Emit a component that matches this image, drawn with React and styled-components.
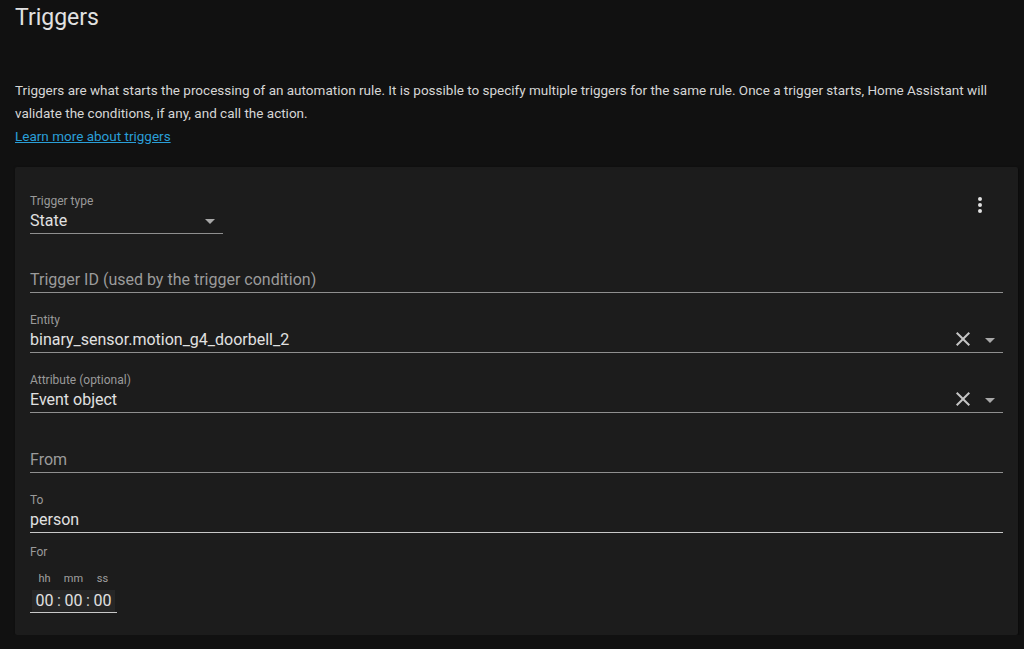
import styled, { createGlobalStyle } from 'styled-components';

const GlobalStyle = createGlobalStyle`
    html, body {
        margin: 0;
        padding: 0;
        background-color: #111111;
        font-family: Roboto, "Liberation Sans", sans-serif;
        color: #e1e1e1;
    }
`

const IconMore = () => (
    <svg width="24" height="24" viewBox="0 0 24 24">
        <path fill="#e1e1e1" d="M12,16A2,2 0 0,1 14,18A2,2 0 0,1 12,20A2,2 0 0,1 10,18A2,2 0 0,1 12,16M12,10A2,2 0 0,1 14,12A2,2 0 0,1 12,14A2,2 0 0,1 10,12A2,2 0 0,1 12,10M12,4A2,2 0 0,1 14,6A2,2 0 0,1 12,8A2,2 0 0,1 10,6A2,2 0 0,1 12,4Z" />
    </svg>
);

const IconClose = () => (
    <svg width="24" height="24" viewBox="0 0 24 24">
        <path fill="#c4c4c4" d="M19,6.41L17.59,5L12,10.59L6.41,5L5,6.41L10.59,12L5,17.59L6.41,19L12,13.41L17.59,19L19,17.59L13.41,12L19,6.41Z" />
    </svg>
);

const Arrow = () => (
    <svg width="10" height="5" viewBox="7 10 10 5">
        <polygon fill="#a8a8a8" points="7 10 12 15 17 10" />
    </svg>
);

const Field = ({ label, value, placeholder, clearable, bright, tight }) => (
    <FieldBox $bright={bright} $tight={tight}>
        {label && <Label>{label}</Label>}
        <ValueRow>
            {value ? <Value>{value}</Value> : <Placeholder>{placeholder}</Placeholder>}
            {clearable && (
                <Actions>
                    <ClearButton><IconClose /></ClearButton>
                    <ArrowWrap><Arrow /></ArrowWrap>
                </Actions>
            )}
        </ValueRow>
    </FieldBox>
);

export default function App() {
    return (
        <Page>
            <GlobalStyle />
            <Title>Triggers</Title>
            <Intro>
                Triggers are what starts the processing of an automation rule. It is possible to specify multiple triggers for the same rule. Once a trigger starts, Home Assistant will validate the conditions, if any, and call the action.
            </Intro>
            <LearnLink href="#">Learn more about triggers</LearnLink>

            <Card>
                <CardHeader>
                    <Select>
                        <Label>Trigger type</Label>
                        <ValueRow>
                            <Value>State</Value>
                            <ArrowWrap><Arrow /></ArrowWrap>
                        </ValueRow>
                    </Select>
                    <MoreButton><IconMore /></MoreButton>
                </CardHeader>

                <Field placeholder="Trigger ID (used by the trigger condition)" tight />
                <Field label="Entity" value="binary_sensor.motion_g4_doorbell_2" clearable />
                <Field label="Attribute (optional)" value="Event object" clearable />
                <Field placeholder="From" />
                <Field label="To" value="person" bright />

                <ForLabel>For</ForLabel>
                <TimeInput>
                    <TimeUnit>
                        <UnitLabel>hh</UnitLabel>
                        <Digits>00</Digits>
                    </TimeUnit>
                    <Colon>:</Colon>
                    <TimeUnit>
                        <UnitLabel>mm</UnitLabel>
                        <Digits>00</Digits>
                    </TimeUnit>
                    <Colon>:</Colon>
                    <TimeUnit>
                        <UnitLabel>ss</UnitLabel>
                        <Digits>00</Digits>
                    </TimeUnit>
                </TimeInput>
            </Card>
        </Page>
    );
}

const Page = styled.div`
    padding: 2px 6px 0 15px;
`

const Title = styled.h1`
    margin: 0;
    font-size: 23px;
    line-height: 32px;
    font-weight: 400;
    color: #e1e1e1;
`

const Intro = styled.p`
    margin: 45px 0 0;
    font-size: 13.5px;
    line-height: 23px;
    color: #d6d6d6;
`

const LearnLink = styled.a`
    display: block;
    width: fit-content;
    font-size: 13.5px;
    line-height: 23px;
    color: #2a9fd8;
    text-decoration: underline;
`

const Card = styled.div`
    margin-top: 19px;
    background-color: #1c1c1c;
    border-radius: 2px;
    box-shadow: 1px 1px 3px rgba(0, 0, 0, 0.5);
    padding: 14px 15px 22px;
    height: 468px;
    box-sizing: border-box;
`

const CardHeader = styled.div`
    display: flex;
    justify-content: space-between;
    align-items: flex-start;
`

const Select = styled.div`
    width: 193px;
    margin-top: 12px;
    border-bottom: 1px solid #8f8f8f;
`

const MoreButton = styled.div`
    width: 48px;
    height: 48px;
    margin-right: -1px;
    display: flex;
    align-items: center;
    justify-content: center;
`

const FieldBox = styled.div`
    height: ${p => p.$tight ? '59px' : '60px'};
    box-sizing: border-box;
    display: flex;
    flex-direction: column;
    justify-content: flex-end;
    border-bottom: 1px solid ${p => p.$bright ? '#c8c8c8' : '#8f8f8f'};
`

const Label = styled.div`
    font-size: 12px;
    line-height: 16px;
    margin-bottom: -1px;
    color: #9a9a9a;
`

const ValueRow = styled.div`
    display: flex;
    align-items: center;
    height: 24px;
    padding-bottom: 1px;
`

const Value = styled.div`
    flex: 1;
    font-size: 16px;
    color: #e1e1e1;
`

const Placeholder = styled.div`
    flex: 1;
    font-size: 16px;
    color: #9b9b9b;
`

const Actions = styled.div`
    display: flex;
    align-items: center;
`

const ClearButton = styled.div`
    display: flex;
    margin-right: 10px;
`

const ArrowWrap = styled.div`
    display: flex;
    margin: 2px 8px 0 0;
`

const ForLabel = styled.div`
    margin-top: 11px;
    font-size: 12px;
    line-height: 16px;
    color: #9a9a9a;
`

const TimeInput = styled.div`
    display: inline-flex;
    align-items: flex-end;
    margin-top: 13px;
    padding: 0 2px;
    border-bottom: 1px solid #c8c8c8;
`

const TimeUnit = styled.div`
    display: flex;
    flex-direction: column;
    align-items: center;
`

const UnitLabel = styled.div`
    font-size: 11px;
    line-height: 12px;
    color: #a0a0a0;
    margin-bottom: 5px;
`

const Digits = styled.div`
    width: 25px;
    height: 22px;
    line-height: 22px;
    text-align: center;
    font-size: 16px;
    color: #e1e1e1;
    background-color: #262626;
`

const Colon = styled.div`
    width: 4px;
    height: 22px;
    line-height: 22px;
    text-align: center;
    font-size: 16px;
    color: #d0d0d0;
    background-color: #262626;
`
